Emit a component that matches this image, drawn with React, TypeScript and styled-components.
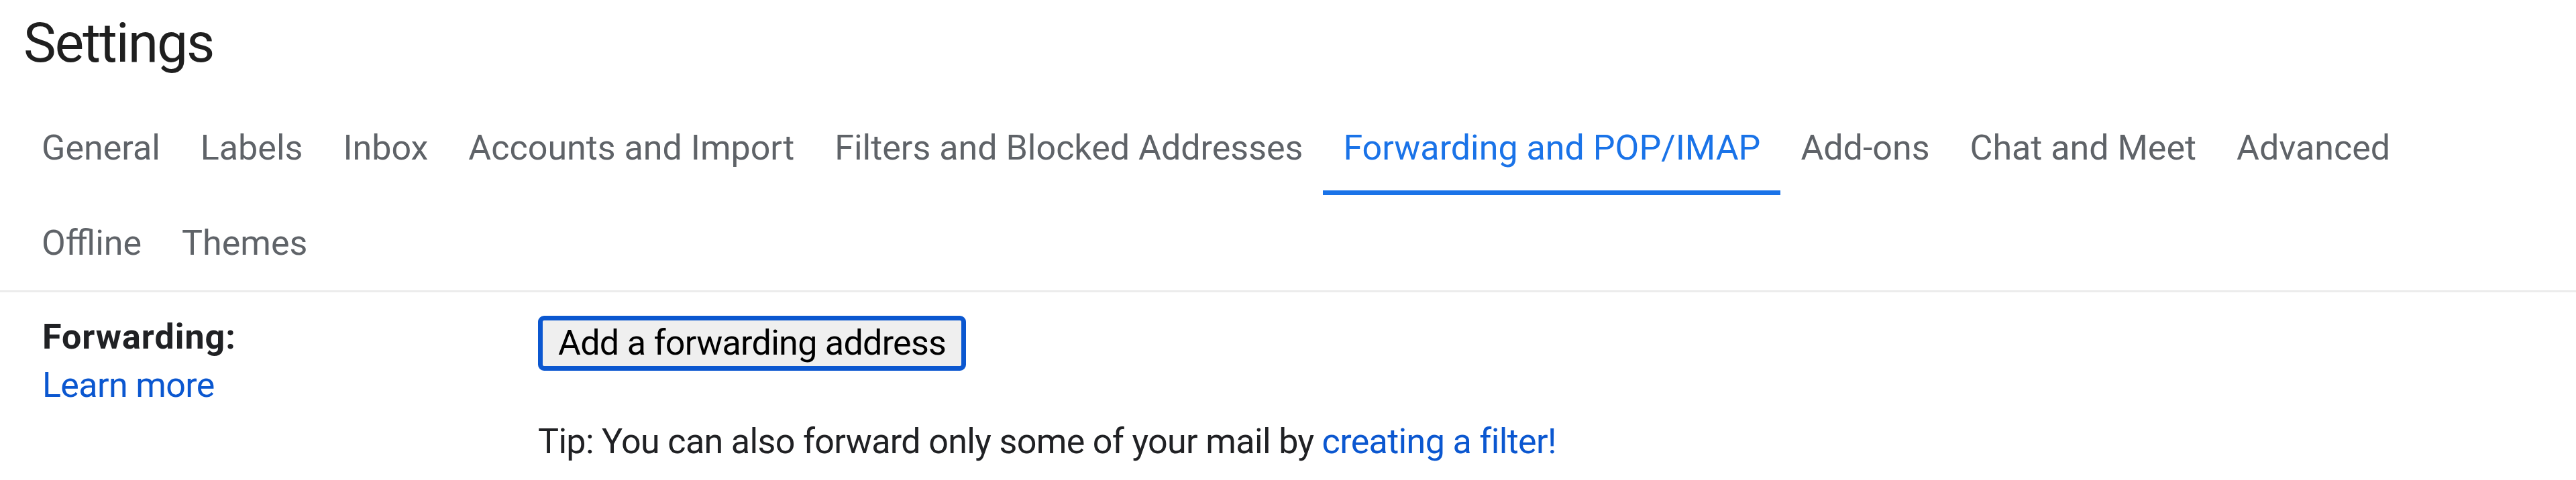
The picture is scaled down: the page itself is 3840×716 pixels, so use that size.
import styled, { createGlobalStyle } from "styled-components";

const GlobalStyle = createGlobalStyle`
  body {
    margin: 0;
    background: #fff;
    font-family: Roboto, "Noto Sans", Arial, sans-serif;
    color: #202124;
  }
`;

const Page = styled.div`
  width: 3840px;
`;

const Title = styled.h1`
  margin: 0;
  padding: 23px 0 44px 35px;
  font-size: 82px;
  font-weight: 400;
  line-height: 82px;
  letter-spacing: -2px;
  color: #1f1f1f;
`;

const TabBar = styled.nav`
  display: flex;
  flex-wrap: wrap;
  padding: 0 160px 0 32px;
  border-bottom: 3px solid #ececec;
`;

const Tab = styled.a<{ $active?: boolean }>`
  display: flex;
  align-items: center;
  height: 142px;
  padding: 0 30px;
  font-size: 52px;
  color: ${(p) => (p.$active ? "#1a73e8" : "#5f6368")};
  box-shadow: ${(p) => (p.$active ? "inset 0 -7px 0 #1a73e8" : "none")};
  cursor: pointer;
  white-space: nowrap;
`;

const Section = styled.div`
  display: grid;
  grid-template-columns: 739px 1fr;
  padding: 31px 0 0 63px;
  font-size: 52px;
  line-height: 72px;
  letter-spacing: -0.65px;
`;

const Label = styled.div`
  font-weight: 700;
  letter-spacing: 1px;
  color: #202124;
`;

const Link = styled.a`
  color: #0b57d0;
  text-decoration: none;
  cursor: pointer;
`;

const Field = styled.div`
  display: flex;
  flex-direction: column;
  align-items: flex-start;
  padding-top: 4px;
`;

const Button = styled.button`
  height: 82px;
  padding: 0 23px;
  border: 7px solid #0b57d0;
  border-radius: 9px;
  background: #efefef;
  font-family: inherit;
  font-size: 52px;
  line-height: 68px;
  letter-spacing: -0.7px;
  color: #000;
  cursor: pointer;
`;

const Tip = styled.p`
  margin: 70px 0 0;
  color: #202124;
`;

const tabs = [
  "General",
  "Labels",
  "Inbox",
  "Accounts and Import",
  "Filters and Blocked Addresses",
  "Forwarding and POP/IMAP",
  "Add-ons",
  "Chat and Meet",
  "Advanced",
  "Offline",
  "Themes",
];

export default function App() {
  return (
    <Page>
      <GlobalStyle />
      <Title>Settings</Title>
      <TabBar>
        {tabs.map((t) => (
          <Tab key={t} $active={t === "Forwarding and POP/IMAP"}>
            {t}
          </Tab>
        ))}
      </TabBar>
      <Section>
        <div>
          <Label>Forwarding:</Label>
          <Link>Learn more</Link>
        </div>
        <Field>
          <Button>Add a forwarding address</Button>
          <Tip>
            Tip: You can also forward only some of your mail by{" "}
            <Link>creating a filter!</Link>
          </Tip>
        </Field>
      </Section>
    </Page>
  );
}
